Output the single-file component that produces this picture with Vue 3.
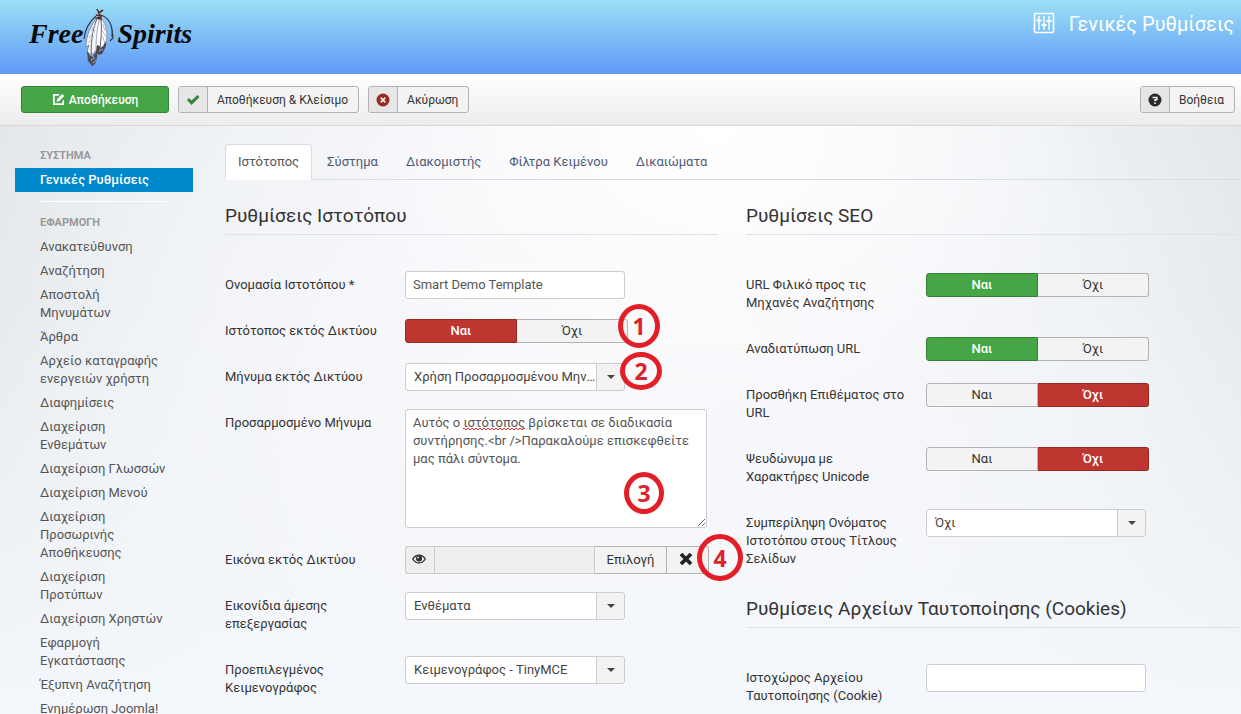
<script setup>
import { ref } from 'vue'

const tabs = ['Ιστότοπος', 'Σύστημα', 'Διακομιστής', 'Φίλτρα Κειμένου', 'Δικαιώματα']
const activeTab = ref(0)

const components = [
  'Ανακατεύθυνση',
  'Αναζήτηση',
  'Αποστολή Μηνυμάτων',
  'Άρθρα',
  'Αρχείο καταγραφής ενεργειών χρήστη',
  'Διαφημίσεις',
  'Διαχείριση Ενθεμάτων',
  'Διαχείριση Γλωσσών',
  'Διαχείριση Μενού',
  'Διαχείριση Προσωρινής Αποθήκευσης',
  'Διαχείριση Προτύπων',
  'Διαχείριση Χρηστών',
  'Εφαρμογή Εγκατάστασης',
  'Έξυπνη Αναζήτηση',
  'Ενημέρωση Joomla!',
]

const siteName = ref('Smart Demo Template')
const offline = ref('yes')
const message = ref(
  'Αυτός ο ιστότοπος βρίσκεται σε διαδικασία συντήρησης.<br />Παρακαλούμε επισκεφθείτε μας πάλι σύντομα.'
)
const image = ref('')
const cookieDomain = ref('')

const seo = ref([
  { id: 'sef', label: 'URL Φιλικό προς τις Μηχανές Αναζήτησης', value: 'yes' },
  { id: 'rewrite', label: 'Αναδιατύπωση URL', value: 'yes' },
  { id: 'suffix', label: 'Προσθήκη Επιθέματος στο URL', value: 'no' },
  { id: 'unicode', label: 'Ψευδώνυμα με Χαρακτήρες Unicode', value: 'no' },
])
</script>

<template>
  <div class="page">
    <header class="header">
      <a class="logo" href="#" aria-label="Free Spirits">
        <span>Free</span>
        <svg class="feathers" viewBox="0 0 34 60" width="34" height="60" aria-hidden="true">
          <path d="M13 8C6 14 2 21 1 31M18 7c8 3 12 11 11 22M29 21l1 9-3 3" fill="none" stroke="#3b3544" stroke-width="1.2" />
          <path d="M15 9C8 17 3 27 3 39l3-2-2 7 5 3 5-6c2-9 3-18 2-32z" fill="#f4f5fa" stroke="#70717f" stroke-width=".7" />
          <path d="M17 9c6 6 8 16 6 27l-3 8-6 4-1-8c0-9 1-19 4-31z" fill="#fff" stroke="#83838f" stroke-width=".7" />
          <path d="M4 43l3 4 3 1 4-5v7l-2 6-3 2-4-5z" fill="#4a4d56" />
          <path d="M14 37l5 2 4-6v5l-4 8-4 1-2-3z" fill="#44464f" />
          <path d="M14 11C9 22 7 37 9 56M18 10c1 12 0 25-2 36" fill="none" stroke="#5f5f68" stroke-width="1" />
          <path d="M12 17l-4 6M12 22l-6 8M11 28l-6 7M20 16l2 7M19 22l4 7M19 28l3 7" fill="none" stroke="#b9bac9" stroke-width="1" />
          <path d="M11 49l-5-3M8 52l4-2M10 55l3-3M17 40l4-3M16 43l4-2" fill="none" stroke="#c6c8cf" stroke-width=".8" />
          <path d="M14 1l2 4 4-3M16 4l2 7-4-1 5-2M13 7l6 1" fill="none" stroke="#552a24" stroke-width="1.6" />
        </svg>
        <span>Spirits</span>
      </a>
      <h1 class="page-title">
        <svg viewBox="0 0 22 22" width="22" height="22" fill="none" stroke="#fff" aria-hidden="true">
          <rect x="1.5" y="1.5" width="19" height="19" rx="1" stroke-width="1.6" />
          <path d="M6 4v14M11 4v14M16 4v14" stroke-width="1.4" />
          <path d="M3.500 8.500h5M8.500 13h5M13.500 9h5" stroke-width="2.200" />
        </svg>
        Γενικές Ρυθμίσεις
      </h1>
    </header>

    <div class="toolbar">
      <button class="btn save" type="button">
        <svg viewBox="0 0 14 14" width="13" height="13" aria-hidden="true">
          <path d="M8 1H1v12h12V7l-2 2v2H3V3h4z" fill="#fff" />
          <path d="M5 9.500l.5-3L11 1l2.300 2.300-5.500 5.500z" fill="#fff" />
        </svg>
        Αποθήκευση
      </button>
      <button class="btn split" type="button">
        <span class="btn-icon">
          <svg viewBox="0 0 14 14" width="14" height="14" aria-hidden="true">
            <path d="M1 7l2-2 2.500 2.500L11.500 2l2 2-8 8z" fill="#378137" />
          </svg>
        </span>
        <span class="btn-text">Αποθήκευση &amp; Κλείσιμο</span>
      </button>
      <button class="btn split" type="button">
        <span class="btn-icon">
          <svg viewBox="0 0 14 14" width="14" height="14" aria-hidden="true">
            <circle cx="7" cy="7" r="6.500" fill="#942a25" />
            <path d="M4.700 4.700l4.600 4.600M9.300 4.700L4.700 9.300" stroke="#f3e3e3" stroke-width="1.800" />
          </svg>
        </span>
        <span class="btn-text">Ακύρωση</span>
      </button>
      <button class="btn split help" type="button">
        <span class="btn-icon">
          <svg viewBox="0 0 14 14" width="14" height="14" aria-hidden="true">
            <circle cx="7" cy="7" r="6.500" fill="#2b2b2b" />
            <path d="M4.500 4.500h4.300v2.300H7v1.400" fill="none" stroke="#eee" stroke-width="1.600" />
            <path d="M6.200 9.500h1.700v1.600H6.200z" fill="#eee" />
          </svg>
        </span>
        <span class="btn-text">Βοήθεια</span>
      </button>
    </div>

    <div class="body">
      <nav class="sidebar">
        <h2 class="nav-header">ΣΥΣΤΗΜΑ</h2>
        <a class="nav-link current" href="#">Γενικές Ρυθμίσεις</a>
        <hr class="divider" />
        <h2 class="nav-header">ΕΦΑΡΜΟΓΗ</h2>
        <a v-for="item in components" :key="item" class="nav-link" href="#">{{ item }}</a>
      </nav>

      <main class="content">
        <div class="tabs" role="tablist">
          <button
            v-for="(tab, i) in tabs"
            :key="tab"
            class="tab"
            :class="{ active: i === activeTab }"
            type="button"
            role="tab"
            :aria-selected="i === activeTab"
            @click="activeTab = i"
          >{{ tab }}</button>
        </div>

        <form class="columns" @submit.prevent>
          <section>
            <h3 class="legend">Ρυθμίσεις Ιστοτόπου</h3>
            <div class="row">
              <label class="label" for="sitename">Ονομασία Ιστοτόπου *</label>
              <input id="sitename" v-model="siteName" class="field" type="text" />
            </div>
            <div class="row">
              <span id="offline-label" class="label">Ιστότοπος εκτός Δικτύου</span>
              <div class="toggle inverse" role="radiogroup" aria-labelledby="offline-label">
                <label class="option yes"><input v-model="offline" type="radio" name="offline" value="yes" />Ναι</label>
                <label class="option no"><input v-model="offline" type="radio" name="offline" value="no" />Όχι</label>
                <span class="marker one">1</span>
              </div>
            </div>
            <div class="row">
              <label class="label" for="offline-message">Μήνυμα εκτός Δικτύου</label>
              <div class="select">
                <select id="offline-message">
                  <option>Χρήση Προσαρμοσμένου Μηνύματος</option>
                </select>
                <span class="marker two">2</span>
              </div>
            </div>
            <div class="row">
              <label class="label" for="custom-message">Προσαρμοσμένο Μήνυμα</label>
              <div class="area">
                <textarea id="custom-message" v-model="message" spellcheck="false"></textarea>
                <span class="squiggle"></span>
                <span class="marker three">3</span>
              </div>
            </div>
            <div class="row">
              <label class="label" for="offline-image">Εικόνα εκτός Δικτύου</label>
              <div class="media">
                <span class="media-eye">
                  <svg viewBox="0 0 14 12" width="14" height="12" aria-hidden="true">
                    <path d="M.7 6C4 .8 10 .8 13.300 6 10 11.200 4 11.200.7 6z" fill="none" stroke="#2d2d2d" stroke-width="1.300" />
                    <circle cx="7" cy="5.500" r="3" fill="#2d2d2d" />
                    <circle cx="6" cy="4.500" r=".9" fill="#eee" />
                  </svg>
                </span>
                <input id="offline-image" v-model="image" type="text" readonly />
                <button class="media-btn" type="button">Επιλογή</button>
                <button class="media-btn clear" type="button" aria-label="Καθαρισμός">
                  <svg viewBox="0 0 14 14" width="14" height="14" aria-hidden="true">
                    <path d="M2 2l10 10M12 2L2 12" stroke="#222" stroke-width="3.800" />
                  </svg>
                </button>
                <span class="marker four">4</span>
              </div>
            </div>
            <div class="row">
              <label class="label" for="frontediting">Εικονίδια άμεσης επεξεργασίας</label>
              <div class="select"><select id="frontediting"><option>Ενθέματα</option></select></div>
            </div>
            <div class="row">
              <label class="label" for="editor">Προεπιλεγμένος Κειμενογράφος</label>
              <div class="select"><select id="editor"><option>Κειμενογράφος - TinyMCE</option></select></div>
            </div>
          </section>

          <section>
            <h3 class="legend">Ρυθμίσεις SEO</h3>
            <div v-for="s in seo" :key="s.id" class="row">
              <span :id="s.id" class="label">{{ s.label }}</span>
              <div class="toggle" role="radiogroup" :aria-labelledby="s.id">
                <label class="option yes"><input v-model="s.value" type="radio" :name="s.id" value="yes" />Ναι</label>
                <label class="option no"><input v-model="s.value" type="radio" :name="s.id" value="no" />Όχι</label>
              </div>
            </div>
            <div class="row">
              <label class="label" for="titles">Συμπερίληψη Ονόματος Ιστοτόπου στους Τίτλους Σελίδων</label>
              <div class="select"><select id="titles"><option>Όχι</option></select></div>
            </div>
            <h3 class="legend">Ρυθμίσεις Αρχείων Ταυτοποίησης (Cookies)</h3>
            <div class="row">
              <label class="label" for="cookie">Ιστοχώρος Αρχείου Ταυτοποίησης (Cookie)</label>
              <input id="cookie" v-model="cookieDomain" class="field" type="text" />
            </div>
          </section>
        </form>
      </main>
    </div>
  </div>
</template>

<style>
body {
  margin: 0;
}
</style>

<style scoped>
* {
  box-sizing: border-box;
}
.page {
  display: flex;
  flex-direction: column;
  height: 100vh;
  overflow: hidden;
  font: 13px/18px Roboto, "Open Sans", sans-serif;
  color: #333;
}
button,
input,
select,
textarea {
  font: inherit;
  color: inherit;
  margin: 0;
}
h1,
h2,
h3 {
  margin: 0;
}
a {
  text-decoration: none;
}

/* Header */
.header {
  flex: none;
  display: flex;
  justify-content: space-between;
  height: 74px;
  padding: 0 7px 0 29px;
  background: linear-gradient(#9be0f5, #5f99f7);
}
.logo {
  display: flex;
  padding-top: 8px;
  font: italic bold 28px/52px "Liberation Serif", serif;
  color: #0a0a0a;
}
.page-title {
  display: flex;
  gap: 14px;
  padding-top: 12px;
  font-size: 20px;
  font-weight: 400;
  line-height: 24px;
  color: #fff;
}

/* Toolbar */
.toolbar {
  flex: none;
  display: flex;
  gap: 9px;
  height: 52px;
  padding: 12px 6px 12px 21px;
  background: linear-gradient(#fff, #ececec);
  border-bottom: 1px solid #d6d9dc;
}
.btn {
  display: flex;
  align-items: center;
  height: 27px;
  padding: 0;
  border: 1px solid #b3b3b3;
  border-radius: 3px;
  background: #f3f3f3;
  font-size: 12px;
}
.save {
  justify-content: center;
  gap: 4px;
  width: 148px;
  border-color: #378137;
  background: #46a546;
  color: #fff;
  font-weight: 500;
}
.btn-icon {
  display: flex;
  align-items: center;
  justify-content: center;
  align-self: stretch;
  width: 29px;
  border-right: 1px solid #b3b3b3;
  border-radius: 2px 0 0 2px;
  background: #e6e6e6;
}
.btn-text {
  padding: 0 10px 0 9px;
}
.help {
  margin-left: auto;
}
.btn svg {
  display: block;
}

/* Body */
.body {
  flex: 1;
  min-height: 0;
  display: flex;
  gap: 32px;
  padding: 18px 2px 0 15px;
  background:
    radial-gradient(ellipse 32% 50% at 58% 0%, #fff, #fff0),
    linear-gradient(#f4f7fb00 30%, #f4f7fb 100%),
    radial-gradient(ellipse 62% 120% at 50% 45%, #faf9fc 0%, #f7f7fb 35%, #eff2f5 65%, #e3e7ea 90%, #dde1e5 100%);
}
.sidebar {
  flex: none;
  width: 178px;
}
.nav-header {
  padding: 3px 25px;
  font-size: 11px;
  font-weight: 700;
  line-height: 18px;
  color: #999;
}
.nav-link {
  display: block;
  padding: 3px 25px;
  color: #555;
}
.nav-link.current {
  background: #08c;
  color: #fff;
  font-weight: 500;
}
.divider {
  height: 1px;
  margin: 9px 26px;
  border: 0;
  background: #fff;
}
.content {
  flex: 1;
  min-width: 0;
}

/* Tabs */
.tabs {
  display: flex;
  gap: 2px;
  margin-bottom: 18px;
  height: 36px;
  border-bottom: 1px solid #d9dcdf;
}
.tab {
  height: 36px;
  padding: 0 12px;
  border: 1px solid transparent;
  border-radius: 4px 4px 0 0;
  background: none;
  color: #4d5b78;
}
.tab.active {
  border-color: #d9dcdf #d9dcdf #fff;
  background: #fff;
  color: #555;
}

/* Form */
.columns {
  display: grid;
  grid-template-columns: 1fr 1fr;
  gap: 28px;
}
.legend {
  margin-bottom: 36px;
  border-bottom: 1px solid #dfe2e5;
  font-size: 19px;
  font-weight: 400;
  line-height: 36px;
}
.row {
  display: flex;
  align-items: flex-start;
  gap: 20px;
  margin-bottom: 18px;
}
.label {
  flex: none;
  width: 160px;
  padding: 5px 0;
}
.field {
  width: 220px;
  height: 28px;
  padding: 0 7px 2px;
  border: 1px solid #ccc;
  border-radius: 3px;
  background: #fff;
  color: #555;
}

.toggle {
  position: relative;
  display: flex;
  margin-top: 2px;
}
.option {
  position: relative;
  width: 112px;
  height: 24px;
  border: 1px solid #b3b3b3;
  background: #f3f3f3;
  line-height: 22px;
  text-align: center;
}
.option input {
  position: absolute;
  inset: 0;
  opacity: 0;
}
.option.yes {
  border-radius: 3px 0 0 3px;
}
.option.no {
  width: 111px;
  border-radius: 0 3px 3px 0;
  border-left: 0;
}
.option:has(input:checked) {
  color: #fff;
  font-weight: 500;
}
.toggle .yes:has(input:checked) {
  background: #46a546;
  border-color: #378137;
}
.toggle .no:has(input:checked),
.toggle.inverse .yes:has(input:checked) {
  background: #bd362f;
  border-color: #942a25;
}

.select {
  position: relative;
  width: 220px;
}
.select select {
  display: block;
  width: 100%;
  height: 28px;
  padding: 0 26px 0 8px;
  border: 1px solid #ccc;
  border-radius: 3px;
  background: linear-gradient(90deg, #ccc 1px, #f3f3f3 1px) right / 28px 100% no-repeat #fff;
  color: #444;
  appearance: none;
  text-overflow: ellipsis;
}
.select::after {
  content: "";
  position: absolute;
  top: 12px;
  right: 10px;
  border: 4px solid transparent;
  border-top-color: #444;
  border-bottom: 0;
  pointer-events: none;
}

.area {
  position: relative;
  width: 302px;
}
.area textarea {
  display: block;
  width: 100%;
  height: 119px;
  padding: 4px 7px;
  border: 1px solid #ccc;
  border-radius: 3px;
  background: #fff;
  color: #555;
}
.squiggle {
  position: absolute;
  top: 19px;
  left: 58px;
  width: 62px;
  height: 2px;
  background:
    linear-gradient(90deg, #e33 2px, transparent 2px) 0 0 / 4px 1px repeat-x,
    linear-gradient(90deg, #e33 2px, transparent 2px) 2px 1px / 4px 1px repeat-x;
  pointer-events: none;
}

.media {
  position: relative;
  display: flex;
  width: 304px;
  height: 28px;
}
.media-eye {
  display: flex;
  justify-content: center;
  width: 29px;
  padding: 6px 3px 0 0;
  border: 1px solid #ccc;
  border-right: 0;
  border-radius: 3px 0 0 3px;
  background: #eee;
}
.media input {
  flex: 1;
  min-width: 0;
  border: 1px solid #ccc;
  background: #eee;
}
.media-btn {
  width: 72px;
  padding: 0;
  border: 1px solid #b3b3b3;
  border-left: 0;
  background: #f3f3f3;
}
.media-btn.clear {
  width: 42px;
  padding: 3px 4px 0 0;
  border-radius: 0 3px 3px 0;
}

/* Numbered callouts over the controls */
.marker {
  position: absolute;
  display: flex;
  align-items: center;
  justify-content: center;
  width: 42px;
  height: 42px;
  border: 5px solid #e31e26;
  border-radius: 50%;
  font: bold 23px/24px "Noto Sans", sans-serif;
  color: #dc2329;
  pointer-events: none;
}
.one {
  top: -15px;
  left: 213px;
  height: 44px;
}
.two {
  top: -11px;
  left: 215px;
  height: 38px;
}
.three {
  top: 63px;
  left: 219px;
  width: 40px;
}
.four {
  top: -12px;
  left: 292px;
  width: 46px;
  height: 47px;
}
</style>
